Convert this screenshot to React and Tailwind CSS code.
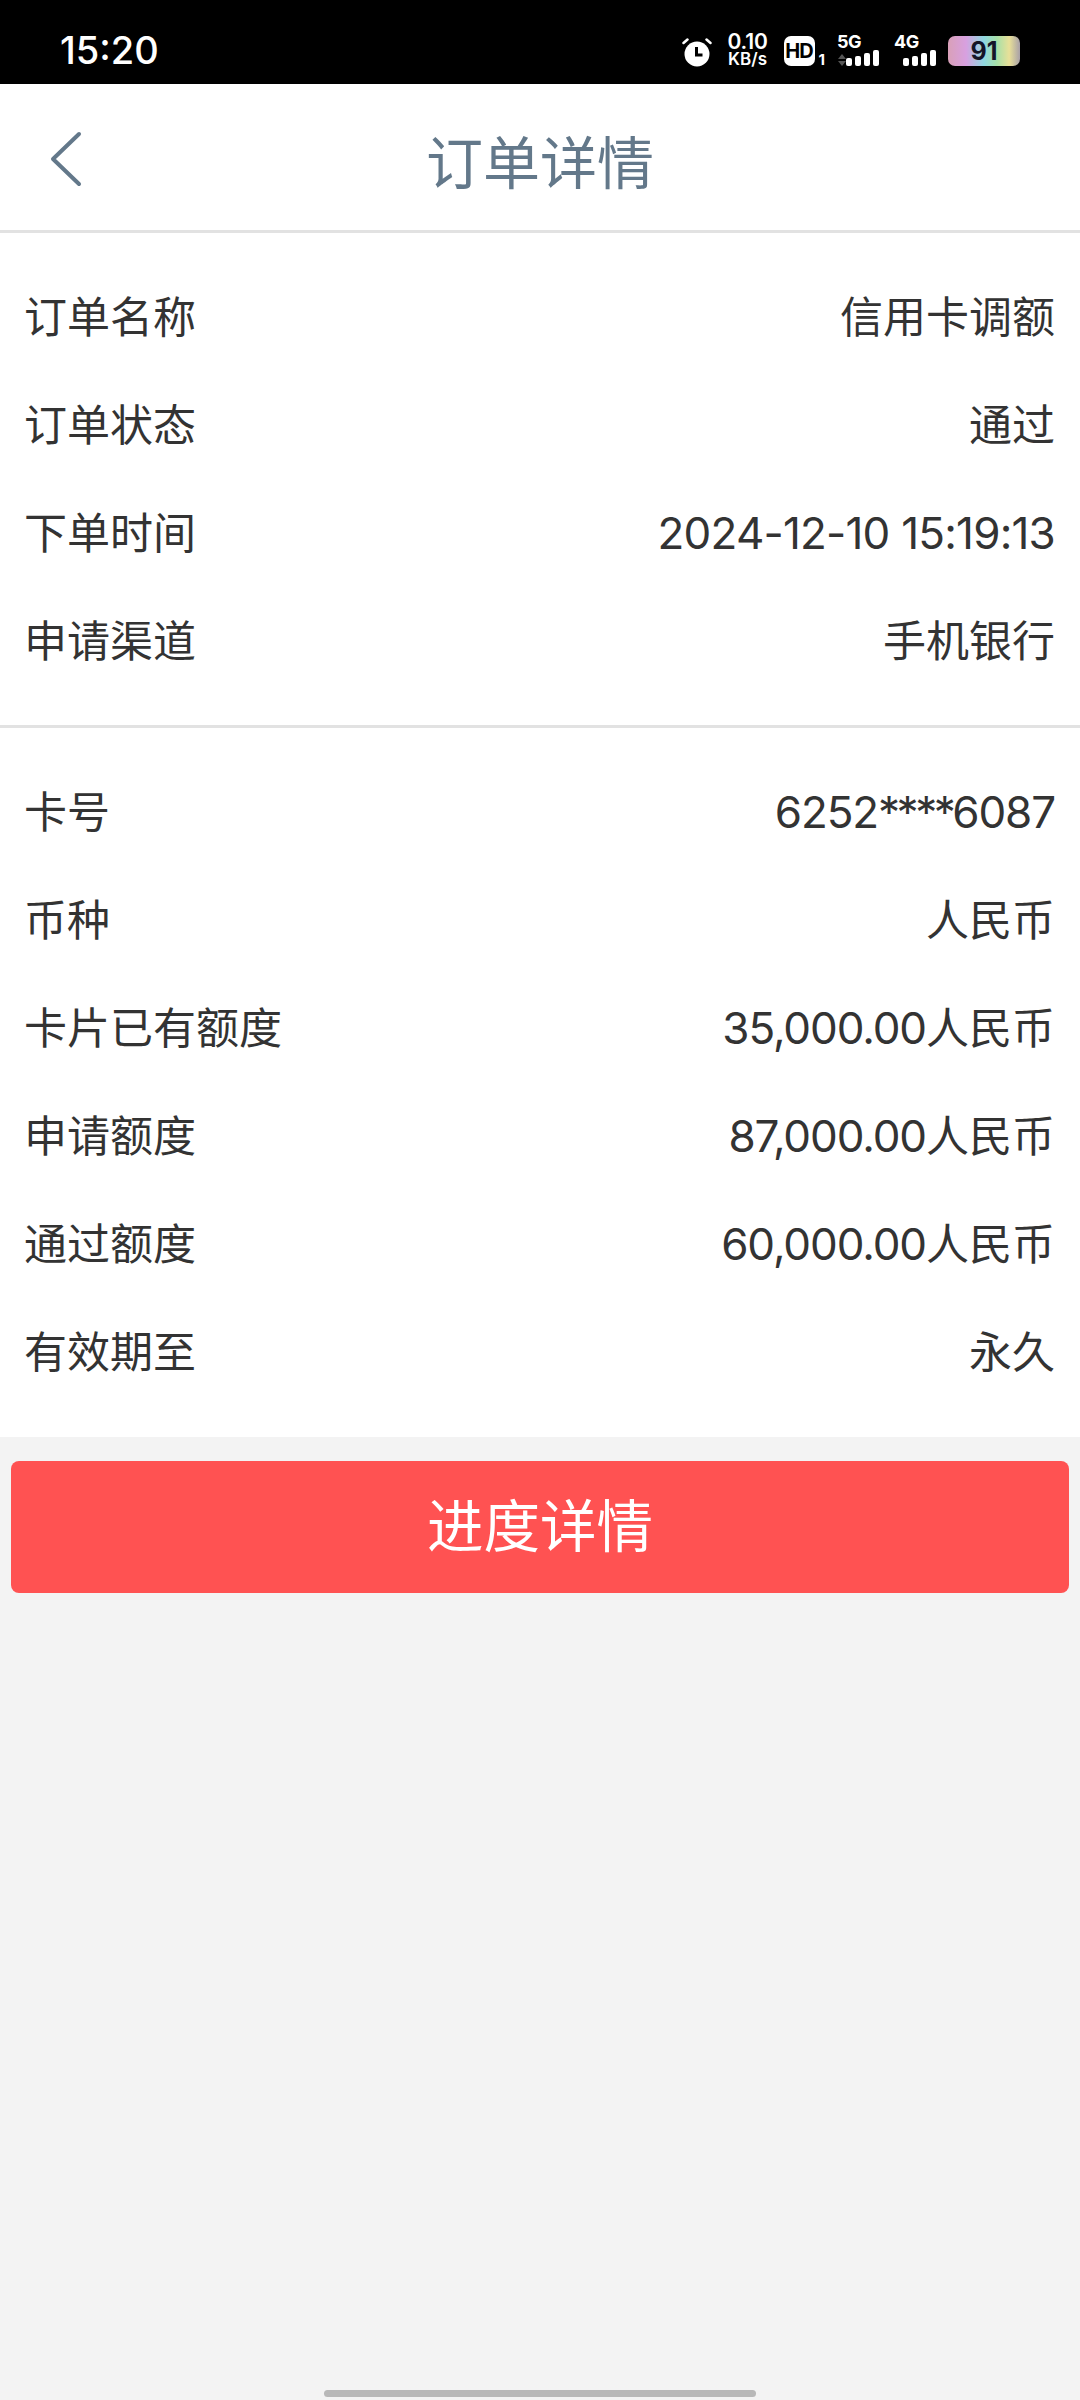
const NUM = 'text-[44px] font-[370] tracking-[-1.1px]'

const ORDER_ROWS = [
  ['订单名称', '信用卡调额'],
  ['订单状态', '通过'],
  ['下单时间', <span className="text-[44px] font-[370] tracking-[-0.8px]">2024-12-10 15:19:13</span>],
  ['申请渠道', '手机银行'],
]

const CARD_ROWS = [
  ['卡号', <span className={NUM}>6252<span className="tracking-[-3.5px]">****</span>6087</span>],
  ['币种', '人民币'],
  ['卡片已有额度', <><span className={NUM}>35,000.00</span>人民币</>],
  ['申请额度', <><span className={NUM}>87,000.00</span>人民币</>],
  ['通过额度', <><span className={NUM}>60,000.00</span>人民币</>],
  ['有效期至', '永久'],
]

function Bars({ className = '' }) {
  return (
    <div className={`flex items-end gap-[3px] ${className}`}>
      <div className="w-[6px] h-[8px] rounded-[2px] bg-white" />
      <div className="w-[6px] h-[10px] rounded-[2px] bg-white" />
      <div className="w-[6px] h-[13px] rounded-[2px] bg-white" />
      <div className="w-[6px] h-[16px] rounded-[2px] bg-white" />
    </div>
  )
}

function StatusBar() {
  return (
    <div className="h-[84px] bg-black flex items-start justify-between text-white pl-[60px] pr-[60px]">
      <span className="mt-[29px] text-[38px] leading-[42px] font-medium">15:20</span>
      <div className="flex items-start mt-[32px]">
        {/* alarm clock */}
        <svg width="30" height="30" viewBox="0 0 30 30" className="mt-[5px]">
          <circle cx="15" cy="17" r="12.5" fill="#fff" />
          <path d="M14.5 10v8h6" fill="none" stroke="#000" strokeWidth="3" />
          <path d="M1.5 6l4-3.5M28.5 6l-4-3.5" stroke="#fff" strokeWidth="2.5" strokeLinecap="round" />
        </svg>
        <div className="ml-[12px] w-[48px] flex flex-col items-center font-semibold">
          <span className="text-[21px] leading-[19px] tracking-[-0.2px]">0.10</span>
          <span className="text-[17px] leading-[17px]">KB/s</span>
        </div>
        <div className="ml-[12px] mt-[4px] w-[31px] h-[30px] rounded-[7px] bg-white flex items-center justify-center">
          <span className="text-black text-[20px] leading-none font-bold tracking-[-1px]">HD</span>
        </div>
        <span className="ml-[4px] mt-[20px] text-[15px] leading-[15px] font-bold">1</span>
        <div className="ml-[12px] mt-[2px] w-[44px] flex flex-col">
          <span className="text-[18px] leading-[16px] font-bold tracking-[-0.5px]">5G</span>
          <div className="flex items-end">
            <div className="w-[9px] flex flex-col items-center gap-[2px]">
              <div className="w-0 h-0 border-x-[4px] border-x-transparent border-b-[5px] border-b-[#555]" />
              <div className="w-0 h-0 border-x-[4px] border-x-transparent border-t-[5px] border-t-[#555]" />
            </div>
            <Bars />
          </div>
        </div>
        <div className="ml-[13px] mt-[2px] w-[44px] flex flex-col">
          <span className="text-[18px] leading-[16px] font-bold tracking-[-0.5px]">4G</span>
          <Bars className="ml-[9px]" />
        </div>
        <div className="ml-[10px] mt-[4px] w-[72px] h-[30px] rounded-[7px] bg-[linear-gradient(90deg,#d9a0b8,#d8a0e0_25%,#8fd8e0_50%,#a8e0a8_68%,#e8e098_85%,#a8a0a8)] flex items-center justify-center">
          <span className="text-[#141428] text-[25px] leading-none font-bold">91</span>
        </div>
      </div>
    </div>
  )
}

function Row({ label, value }) {
  return (
    <div className="h-[108px] flex items-center justify-between pl-[24px] pr-[25px] text-[#333] text-[43px] leading-none">
      <span>{label}</span>
      <span>{value}</span>
    </div>
  )
}

export default function App() {
  return (
    <div className="w-[1080px] h-[2400px] bg-[#f3f3f3] flex flex-col font-['Inter','Noto_Sans_CJK_SC',sans-serif]">
      <StatusBar />

      <div className="relative h-[149px] bg-white flex items-center justify-center border-b-[3px] border-[#e2e2e2]">
        <svg width="32" height="56" viewBox="0 0 32 56" className="absolute left-[50px] top-[47px]" fill="none">
          <path d="M29 3L3 28l26 25" stroke="#63788a" strokeWidth="4" strokeLinecap="round" strokeLinejoin="round" />
        </svg>
        <span className="text-[57px] leading-none text-[#63788a] mt-[12px]">订单详情</span>
      </div>

      <div className="bg-white py-[30px] border-b-[3px] border-[#e2e2e2]">
        {ORDER_ROWS.map(([label, value]) => <Row key={label} label={label} value={value} />)}
      </div>

      <div className="bg-white pt-[30px] pb-[31px]">
        {CARD_ROWS.map(([label, value]) => <Row key={label} label={label} value={value} />)}
      </div>

      <button className="mx-[11px] mt-[24px] h-[132px] rounded-[8px] bg-[#ff5252] text-white text-[56.5px] leading-none">
        进度详情
      </button>

      <div className="mt-auto mb-[3px] mx-auto w-[432px] h-[7px] rounded-full bg-[#b8b8b8]" />
    </div>
  )
}
